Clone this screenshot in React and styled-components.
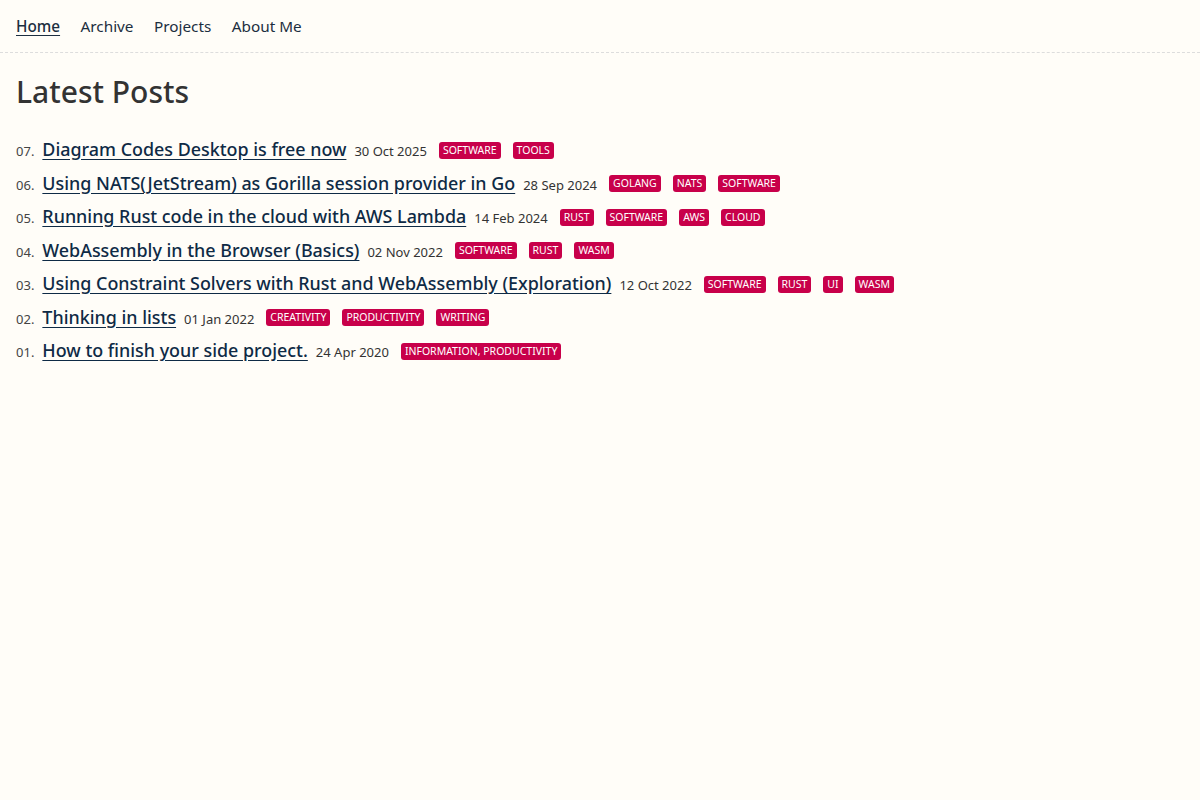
import React from "react";
import styled, { createGlobalStyle } from "styled-components";

const Global = createGlobalStyle`
  html, body { margin: 0; padding: 0; background: #fffdf8; }
  body { font-family: "Noto Sans", "Open Sans", sans-serif; color: #222; }
`;

const Page = styled.div`
  min-height: 800px;
  background: #fffdf8;
`;

const Nav = styled.nav`
  display: flex;
  gap: 20.5px;
  padding: 14px 16px 14px;
  border-bottom: 1px dashed #ddd;
`;

const NavLink = styled.a`
  font-size: 15.3px;
  line-height: 24px;
  color: #1c2e40;
  text-decoration: ${(p) => (p.$active ? "underline" : "none")};
  font-weight: ${(p) => (p.$active ? 500 : 400)};
  text-underline-offset: 3px;
`;

const Main = styled.main`
  padding: 0 16px;
`;

const Title = styled.h1`
  margin: 20px 0 26px;
  font-size: 30px;
  line-height: 38px;
  font-weight: 500;
  color: #333;
`;

const List = styled.ol`
  list-style: none;
  margin: 0;
  padding: 0;
  display: flex;
  flex-direction: column;
  gap: 7px;
`;

const Row = styled.li`
  display: flex;
  align-items: baseline;
  height: 26.5px;
`;

const Num = styled.span`
  font-size: 13px;
  color: #444;
  margin-right: 8px;
`;

const PostLink = styled.a`
  font-size: 17.9px;
  font-weight: 500;
  color: #0e2a45;
  text-decoration: underline;
  text-underline-offset: 3px;
  margin-right: 8px;
`;

const DateText = styled.span`
  font-size: 13px;
  color: #333;
  margin-right: 12px;
`;

const Tag = styled.span`
  align-self: center;
  font-size: 10.5px;
  line-height: 17px;
  padding: 0 4px;
  border-radius: 3px;
  background: #c8004a;
  color: #fff;
  margin-right: 12px;
  text-transform: uppercase;
`;

const posts = [
  ["07", "Diagram Codes Desktop is free now", "30 Oct 2025", ["software", "tools"]],
  ["06", "Using NATS(JetStream) as Gorilla session provider in Go", "28 Sep 2024", ["golang", "nats", "software"]],
  ["05", "Running Rust code in the cloud with AWS Lambda", "14 Feb 2024", ["rust", "software", "aws", "cloud"]],
  ["04", "WebAssembly in the Browser (Basics)", "02 Nov 2022", ["software", "rust", "wasm"]],
  ["03", "Using Constraint Solvers with Rust and WebAssembly (Exploration)", "12 Oct 2022", ["software", "rust", "ui", "wasm"]],
  ["02", "Thinking in lists", "01 Jan 2022", ["creativity", "productivity", "writing"]],
  ["01", "How to finish your side project.", "24 Apr 2020", ["information, productivity"]],
];

export default function App() {
  return (
    <Page>
      <Global />
      <Nav>
        <NavLink href="#" $active>Home</NavLink>
        <NavLink href="#">Archive</NavLink>
        <NavLink href="#">Projects</NavLink>
        <NavLink href="#">About Me</NavLink>
      </Nav>
      <Main>
        <Title>Latest Posts</Title>
        <List>
          {posts.map(([n, t, d, tags]) => (
            <Row key={n}>
              <Num>{n}.</Num>
              <PostLink href="#">{t}</PostLink>
              <DateText>{d}</DateText>
              {tags.map((tg) => (
                <Tag key={tg}>{tg}</Tag>
              ))}
            </Row>
          ))}
        </List>
      </Main>
    </Page>
  );
}
